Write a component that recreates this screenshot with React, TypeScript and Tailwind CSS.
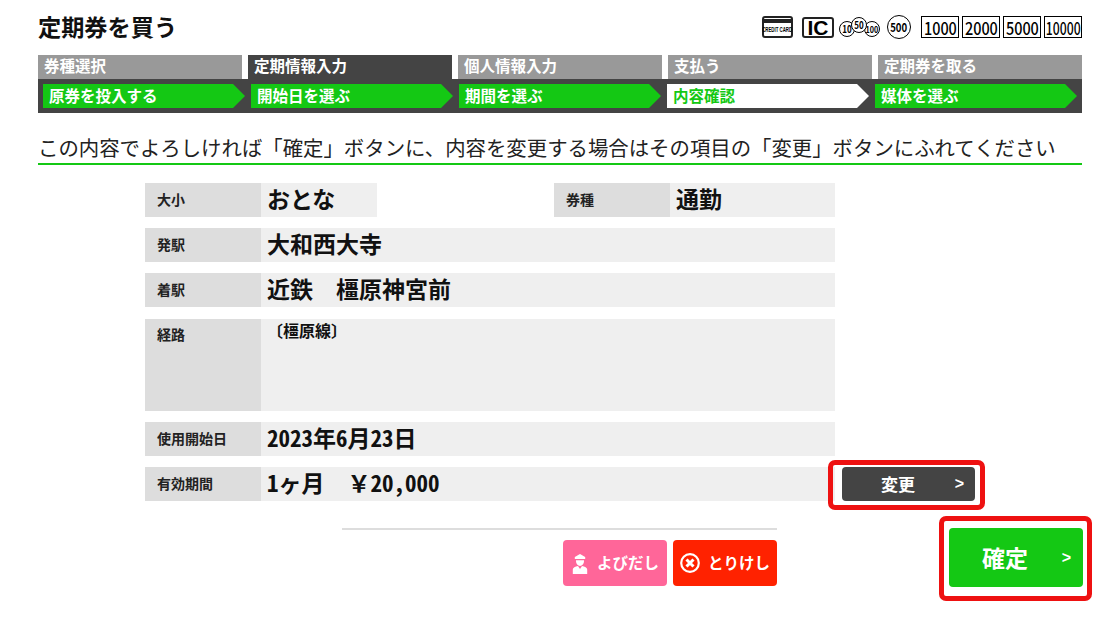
const steps = [
  { tab: '券種選択', arrow: '原券を投入する' },
  { tab: '定期情報入力', arrow: '開始日を選ぶ', current: true },
  { tab: '個人情報入力', arrow: '期間を選ぶ' },
  { tab: '支払う', arrow: '内容確認', active: true },
  { tab: '定期券を取る', arrow: '媒体を選ぶ' },
];

const notes = ['1000', '2000', '5000', '10000'];

const arrowShape = '[clip-path:polygon(0_0,calc(100%-12px)_0,100%_50%,calc(100%-12px)_100%,0_100%)]';

function Coin({ value, size, className = '' }: { value: string; size: string; className?: string }) {
  return (
    <span className={`flex items-center justify-center rounded-full border-[1.5px] border-black bg-white font-['Noto_Sans_CJK_JP',sans-serif] font-bold leading-none ${size} ${className}`}>
      <span className="scale-x-[0.8]">{value}</span>
    </span>
  );
}

function PayIcons() {
  return (
    <div className="flex items-center text-black">
      <div className="flex h-[22px] w-[31px] flex-col rounded-[3px] border-2 border-[#222]">
        <div className="mt-[1px] h-[4px] bg-[#222]" />
        <div className="mt-[3px] flex justify-center font-['Liberation_Sans',sans-serif] text-[7px] leading-none font-bold whitespace-nowrap">
          <span className="-mx-[12px] inline-block scale-x-[0.62]">CREDIT CARD</span>
        </div>
      </div>
      <div className="ml-[9px] flex h-[21px] w-[32px] items-center justify-center rounded-[3px] border-2 border-[#222] font-['Liberation_Sans',sans-serif] text-[21px] leading-none font-bold">
        IC
      </div>
      <div className="relative ml-[5px] h-[22px] w-[41px]">
        <Coin value="10" size="h-[16px] w-[16px] text-[10px]" className="absolute top-[5px] left-0" />
        <Coin value="100" size="h-[16px] w-[16px] text-[9px]" className="absolute top-[5px] right-0" />
        <Coin value="50" size="h-[16px] w-[16px] text-[10px]" className="absolute top-[1px] left-[12px]" />
      </div>
      <Coin value="500" size="ml-[7px] h-[24px] w-[24px] text-[12px]" />
      <div className="ml-[10px] flex gap-[3px]">
        {notes.map((note) => (
          <div
            key={note}
            className="flex h-[22px] w-[38px] items-center justify-center border border-black font-['Noto_Sans_CJK_JP',sans-serif] text-[17px] font-medium leading-none"
          >
            <span className={note === '10000' ? 'scale-x-[0.72]' : 'scale-x-[0.85]'}>{note}</span>
          </div>
        ))}
      </div>
    </div>
  );
}

function Stepper() {
  return (
    <div className="mt-[14px]">
      <div className="flex gap-[6px]">
        {steps.map((step) => (
          <div
            key={step.tab}
            className={`h-[24px] w-[204px] px-[6px] text-[15.500px] leading-[21px] font-bold text-white ${step.current ? 'bg-[#444444]' : 'bg-[#999999]'}`}
          >
            {step.tab}
          </div>
        ))}
      </div>
      <div className="flex h-[34px] items-center gap-[6px] bg-[#444444] pl-[5px]">
        {steps.map((step) => (
          <div
            key={step.arrow}
            className={`h-[24px] w-[202px] pl-[6px] text-[15.500px] leading-[22px] font-bold ${arrowShape} ${step.active ? 'bg-white text-[#14c814]' : 'bg-[#14c814] text-white'}`}
          >
            {step.arrow}
          </div>
        ))}
      </div>
    </div>
  );
}

function Label({ children }: { children: string }) {
  return (
    <div className="w-[116px] shrink-0 bg-[#dddddd] pl-[12px] text-[14px] leading-[32px] font-bold text-[#222]">{children}</div>
  );
}

function Row({ label, children }: { label: string; children: React.ReactNode }) {
  return (
    <div className="flex h-[34px] w-[690px] leading-[31px]">
      <Label>{label}</Label>
      <div className="flex-1 bg-[#efefef] pl-[6px] text-[23px] font-bold text-[#111]">{children}</div>
    </div>
  );
}

export default function App() {
  return (
    <div className="h-[627px] w-[1120px] overflow-hidden bg-white pt-[12px] pl-[38px] font-['Noto_Sans_CJK_JP',sans-serif]">
      <div className="w-[1044px]">
        <div className="flex h-[28px] items-center justify-between">
          <h1 className="text-[23.200px] leading-[28px] font-bold text-[#111]">定期券を買う</h1>
          <div className="pt-[2px]">
            <PayIcons />
          </div>
        </div>
        <div className="h-px" />
        <Stepper />
        <p className="mt-[20px] border-b-2 border-[#14c814] pb-[2px] text-[20.400px] leading-[28px] whitespace-nowrap text-[#222]">
          この内容でよろしければ「確定」ボタンに、内容を変更する場合はその項目の「変更」ボタンにふれてください
        </p>
      </div>

      <div className="mt-[18px] ml-[107px] flex flex-col gap-[11px]">
        <div className="flex h-[34px] w-[690px] leading-[31px]">
          <Label>大小</Label>
          <div className="w-[116px] bg-[#efefef] pl-[6px] text-[23px] font-bold text-[#111]">おとな</div>
          <div className="ml-[177px] flex flex-1">
            <Label>券種</Label>
            <div className="flex-1 bg-[#efefef] pl-[6px] text-[23px] font-bold text-[#111]">通勤</div>
          </div>
        </div>
        <Row label="発駅">大和西大寺</Row>
        <Row label="着駅">近鉄　橿原神宮前</Row>
        <div className="mt-px flex h-[92px] w-[690px]">
          <div className="w-[116px] shrink-0 bg-[#dddddd] pt-[5px] pl-[12px] text-[14px] font-bold text-[#222]">経路</div>
          <div className="flex-1 bg-[#efefef] pl-[6px] text-[16px] leading-[22px] font-bold text-[#111]">〔橿原線〕</div>
        </div>
        <Row label="使用開始日">
          <span className="[font-feature-settings:'hwid']">2023</span>年
          <span className="[font-feature-settings:'hwid']">6</span>月
          <span className="[font-feature-settings:'hwid']">23</span>日
        </Row>
        <div className="flex items-center">
          <Row label="有効期間">
            <span className="[font-feature-settings:'hwid']">1</span>ヶ月　￥
            <span className="[font-feature-settings:'hwid']">20,000</span>
          </Row>
          <button className="relative ml-[7px] flex h-[34px] w-[133px] items-center rounded-[4px] bg-[#444444] text-[17px] font-bold text-white">
            <span className="flex-1 pr-[21px] text-center">変更</span>
            <span className="absolute right-[11px] font-['Liberation_Sans',sans-serif] text-[16px]">&gt;</span>
            <span className="absolute -top-[7px] -right-[10px] -bottom-[9px] -left-[14px] rounded-[7px] border-[5px] border-[#ee1111]" />
          </button>
        </div>
      </div>

      <div className="mt-[27px] flex items-start">
        <div className="ml-[304px] w-[435px] border-t-2 border-[#dddddd] pt-[10px]">
          <div className="flex justify-end gap-[6px]">
            <button className="flex h-[46px] w-[104px] items-center justify-center gap-[9px] rounded-[4px] bg-[#ff6699] pl-[1px] text-[15.500px] font-bold text-white">
              <svg viewBox="0 0 20 26" className="h-[25px] w-[16px] shrink-0" fill="#fff">
                <path d="M3.500 5 10 1l6.500 4v2.500h-13z" />
                <path d="M5 9h10v1c0 3.500-2.200 6-5 6s-5-2.500-5-6z" />
                <path d="M1 26v-5.500c0-2.500 3-3.800 6.500-4.500L10 20l2.500-4c3.500.7 6.500 2 6.500 4.500V26z" />
              </svg>
              よびだし
            </button>
            <button className="flex h-[46px] w-[104px] items-center justify-center gap-[8px] rounded-[4px] bg-[#ff2200] text-[15.500px] font-bold text-white">
              <svg viewBox="0 0 20 20" className="h-[20px] w-[20px] shrink-0" fill="none" stroke="#fff">
                <circle cx="10" cy="10" r="8.800" strokeWidth="2.200" />
                <path d="M6.500 6.500l7 7M13.500 6.500l-7 7" strokeWidth="3" />
              </svg>
              とりけし
            </button>
          </div>
        </div>
        <button className="relative ml-[172px] flex h-[59px] w-[134px] items-center rounded-[4px] bg-[#14c814] text-[23px] font-bold text-white">
          <span className="flex-1 pr-[22px] text-center">確定</span>
          <span className="absolute right-[12px] font-['Liberation_Sans',sans-serif] text-[16px]">&gt;</span>
          <span className="absolute -top-[12px] -right-[9px] -bottom-[14px] -left-[10px] rounded-[7px] border-[5px] border-[#ee1111]" />
        </button>
      </div>
    </div>
  );
}
